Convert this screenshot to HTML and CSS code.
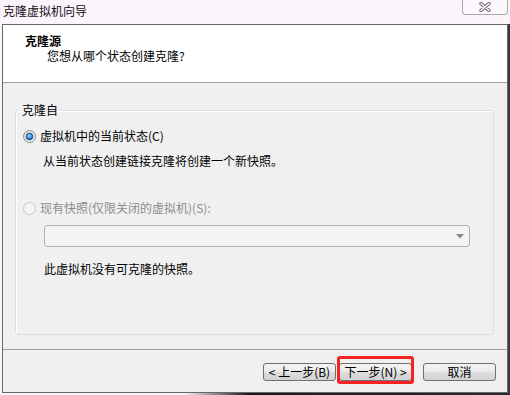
FILE: index.html
```html
<!DOCTYPE html>
<html lang="zh-CN">
<head>
    <meta charset="UTF-8">
    <title>克隆虚拟机向导</title>
    <link rel="stylesheet" href="styles.css">
</head>
<body>
    <div class="titlebar">
        <span class="title">克隆虚拟机向导</span>
        <span class="close">
            <svg width="12" height="10" viewBox="0 0 12 10">
                <path d="M2 1.5 L10 8.5 M10 1.5 L2 8.5" stroke="#6f6f6f" stroke-width="3.4" stroke-linecap="round"/>
                <path d="M2 1.5 L10 8.5 M10 1.5 L2 8.5" stroke="#fff" stroke-width="1.4" stroke-linecap="round"/>
            </svg>
        </span>
    </div>

    <div class="dialog">
        <div class="header">
            <div class="h-title">克隆源</div>
            <div class="h-sub">您想从哪个状态创建克隆?</div>
        </div>

        <div class="body">
            <fieldset class="group">
                <legend>克隆自</legend>

                <div class="option">
                    <svg class="radio" width="13" height="13" viewBox="0 0 13 13">
                        <defs>
                            <radialGradient id="dot" cx="0.45" cy="0.4" r="0.6">
                                <stop offset="0" stop-color="#9fdcff"/>
                                <stop offset="0.6" stop-color="#3b86d6"/>
                                <stop offset="1" stop-color="#1a4c8f"/>
                            </radialGradient>
                            <linearGradient id="ring" x1="0" y1="0" x2="1" y2="1">
                                <stop offset="0" stop-color="#d9d9d9"/>
                                <stop offset="1" stop-color="#f8f8f8"/>
                            </linearGradient>
                        </defs>
                        <circle cx="6.5" cy="6.5" r="6" fill="url(#ring)" stroke="#8c8c8c"/>
                        <circle cx="6.5" cy="6.5" r="3.4" fill="url(#dot)" stroke="#1f4f8c" stroke-width="0.8"/>
                    </svg>
                    <span>虚拟机中的当前状态(C)</span>
                </div>
                <div class="desc">从当前状态创建链接克隆将创建一个新快照。</div>

                <div class="option disabled">
                    <svg class="radio" width="13" height="13" viewBox="0 0 13 13">
                        <circle cx="6.5" cy="6.5" r="6" fill="#f3f3f3" stroke="#c6c6c6"/>
                    </svg>
                    <span>现有快照(仅限关闭的虚拟机)(S):</span>
                </div>

                <div class="combo">
                    <svg width="8" height="5" viewBox="0 0 8 5">
                        <path d="M0 0 H8 L4 4.5 Z" fill="#8a8a8a"/>
                    </svg>
                </div>

                <div class="note">此虚拟机没有可克隆的快照。</div>
            </fieldset>
        </div>

        <div class="footer">
            <button>&lt; 上一步(B)</button>
            <span class="highlight"><button>下一步(N) &gt;</button></span>
            <button class="cancel">取消</button>
        </div>
    </div>
</body>
</html>
```

FILE: styles.css
```css
body {
    margin: 0;
    width: 510px;
    height: 395px;
    overflow: hidden;
    background-color: #fbf4fb;
    font-family: "Noto Sans CJK SC", "Liberation Sans", sans-serif;
    font-size: 12px;
    color: #000;
}
.titlebar {
    height: 24px;
    display: flex;
    justify-content: space-between;
    align-items: flex-start;
}
.title {
    padding: 3px 0 0 3px;
    line-height: 16px;
    color: #111;
}
.close {
    width: 44px;
    height: 14px;
    margin-right: 2px;
    border: 1px solid #ababab;
    border-top: none;
    border-radius: 0 0 4px 4px;
    background-color: #fdf8fd;
    display: flex;
    justify-content: center;
    align-items: center;
}
.dialog {
    position: relative;
    margin-left: 2px;
    width: 506px;
    height: 369px;
    box-sizing: border-box;
    border: 1px solid #676767;
    background-color: #f0f0f0;
    box-shadow: 2px 0 0 #3c3c3c;
    display: flex;
    flex-direction: column;
}
.dialog::after {
    content: "";
    position: absolute;
    left: 180px;
    right: -3px;
    bottom: -3px;
    height: 2px;
    background: linear-gradient(to right, rgba(0,0,0,0), #1a1a1a 20%, #2a2a2a);
}
.header {
    height: 49px;
    padding-top: 8px;
    background-color: #fff;
    border-bottom: 1px solid #a0a0a0;
}
.h-title {
    font-weight: bold;
    line-height: 15px;
    padding-left: 22px;
}
.h-sub {
    line-height: 15px;
    padding-left: 44px;
}
.body {
    height: 266px;
    padding-top: 19px;
    box-sizing: border-box;
}
.group {
    margin: 0 13px 0 12px;
    padding: 0 0 57px 0;
    border: 1px solid #d5dfe5;
    border-radius: 3px;
    box-shadow: inset 1px 1px 0 #fff;
    min-width: 0;
}
.group legend {
    margin-left: 3px;
    padding: 0 2px 0 3px;
    line-height: 16px;
}
.option {
    display: flex;
    align-items: center;
    gap: 4px;
    padding-left: 7px;
    line-height: 16px;
    margin-top: 10px;
}
.option.disabled {
    color: #8d8d8d;
    margin-top: 31px;
}
.desc {
    padding-left: 27px;
    line-height: 16px;
    margin-top: 9px;
}
.combo {
    margin: 9px 0 0 28px;
    width: 426px;
    height: 22px;
    box-sizing: border-box;
    border: 1px solid #b3b3b3;
    border-radius: 3px;
    background-color: #f4f4f4;
    display: flex;
    justify-content: flex-end;
    align-items: center;
    padding-right: 5px;
}
.note {
    padding-left: 28px;
    line-height: 16px;
    margin-top: 14px;
}
.footer {
    height: 43px;
    box-sizing: border-box;
    border-top: 1px solid #a0a0a0;
    display: flex;
    justify-content: flex-end;
    align-items: flex-start;
    padding: 13px 11px 0 0;
}
.footer button {
    width: 73px;
    height: 18px;
    padding: 0;
    border: 1px solid #707070;
    border-radius: 3px;
    background: linear-gradient(#f3f3f3, #ebebeb 45%, #dcdcdc 55%, #d2d2d2);
    font-family: "Noto Sans CJK SC", "Liberation Sans", sans-serif;
    font-size: 12px;
    line-height: 16px;
    color: #000;
}
.highlight {
    position: relative;
    margin-left: 3px;
    display: flex;
}
.highlight::after {
    content: "";
    position: absolute;
    top: -7px;
    bottom: -3px;
    left: -2px;
    right: -2px;
    border: 3px solid #f42424;
    border-radius: 3px;
}
.footer .cancel {
    margin-left: 11px;
}
```
